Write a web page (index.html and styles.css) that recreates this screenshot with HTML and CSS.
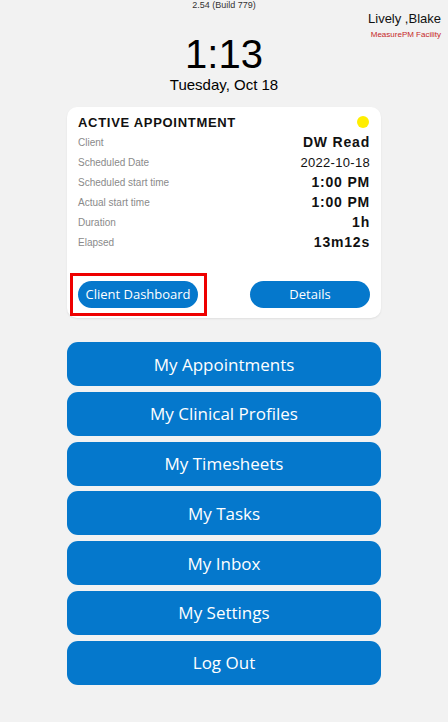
FILE: index.html
```html
<!DOCTYPE html>
<html lang="en">
<head>
    <meta charset="UTF-8">
    <meta name="viewport" content="width=device-width, initial-scale=1.0">
    <title>MeasurePM Home</title>
    <link rel="stylesheet" href="styles.css">
</head>
<body>

<div class="screen">
    <div class="version">2.54 (Build 779)</div>

    <!-- user info -->
    <div class="user">
        <div class="user-name">Lively ,Blake</div>
        <div class="user-facility">MeasurePM Facility</div>
    </div>

    <div class="clock">
        <div class="time">1:13</div>
        <div class="date">Tuesday, Oct 18</div>
    </div>

    <!-- active appointment card -->
    <div class="card">
        <div class="card-head">
            <h2>ACTIVE APPOINTMENT</h2>
            <span class="status-dot"></span>
        </div>
        <div class="row"><span class="label">Client</span><span class="value">DW Read</span></div>
        <div class="row"><span class="label">Scheduled Date</span><span class="value plain">2022-10-18</span></div>
        <div class="row"><span class="label">Scheduled start time</span><span class="value">1:00 PM</span></div>
        <div class="row"><span class="label">Actual start time</span><span class="value">1:00 PM</span></div>
        <div class="row"><span class="label">Duration</span><span class="value">1h</span></div>
        <div class="row"><span class="label">Elapsed</span><span class="value">13m12s</span></div>

        <div class="card-actions">
            <div class="highlight">
                <button class="pill">Client Dashboard</button>
            </div>
            <button class="pill">Details</button>
        </div>
    </div>

    <!-- main menu -->
    <div class="menu">
        <button class="menu-btn">My Appointments</button>
        <button class="menu-btn">My Clinical Profiles</button>
        <button class="menu-btn">My Timesheets</button>
        <button class="menu-btn">My Tasks</button>
        <button class="menu-btn">My Inbox</button>
        <button class="menu-btn">My Settings</button>
        <button class="menu-btn">Log Out</button>
    </div>
</div>

</body>
</html>
```

FILE: styles.css
```css
body {
    font-family: "Liberation Sans", Arial, sans-serif;
    margin: 0;
    padding: 0;
    background-color: #f2f2f2;
}
.screen {
    position: relative;
    width: 448px;
    height: 722px;
    padding: 0 67px;
    box-sizing: border-box;
}
.version {
    text-align: center;
    font-size: 9px;
    color: #333;
    line-height: 11px;
}
.user {
    position: absolute;
    top: 11px;
    right: 7px;
    text-align: right;
}
.user-name {
    font-size: 13px;
    color: #111;
    line-height: 16px;
}
.user-facility {
    font-size: 8px;
    color: #c62828;
    margin-top: 3px;
}
.clock {
    text-align: center;
    color: #000;
    margin-top: 21px;
}
.time {
    font-size: 40px;
    line-height: 44px;
}
.date {
    font-size: 15px;
    line-height: 18px;
}
.card {
    margin-top: 13px;
    background-color: #fff;
    border-radius: 10px;
    box-shadow: 0 1px 2px rgba(0, 0, 0, 0.08);
    padding: 6px 11px 10px 11px;
    height: 211px;
    box-sizing: border-box;
    display: flex;
    flex-direction: column;
}
.card-head {
    display: flex;
    justify-content: space-between;
    align-items: center;
    height: 18px;
    margin-bottom: 1px;
}
.card-head h2 {
    margin: 0;
    font-size: 13px;
    letter-spacing: 0.7px;
    color: #111;
}
.status-dot {
    width: 12px;
    height: 12px;
    border-radius: 50%;
    background-color: #ffee00;
    margin-right: 1px;
}
.row {
    display: flex;
    justify-content: space-between;
    align-items: center;
    height: 20px;
}
.label {
    font-size: 10px;
    color: #8a8a8a;
}
.value {
    font-size: 14px;
    font-weight: bold;
    letter-spacing: 0.8px;
    color: #111;
}
.value.plain {
    font-weight: normal;
    font-size: 13px;
    letter-spacing: 0.3px;
}
.card-actions {
    margin-top: auto;
    display: flex;
    justify-content: space-between;
    align-items: center;
    height: 28px;
}
.highlight {
    border: 3px solid #ee0000;
    margin: -9px 0 -9px -8px;
    padding: 5px 6px 5px 5px;
}
.pill {
    background-color: #0578cc;
    color: #fff;
    border: none;
    border-radius: 14px;
    font-family: "Open Sans", sans-serif;
    font-size: 13px;
    width: 120px;
    height: 27px;
    padding: 0;
}
.menu {
    margin-top: 24px;
    display: flex;
    flex-direction: column;
    gap: 5.8px;
}
.menu-btn {
    background-color: #0578cc;
    color: #fff;
    border: none;
    border-radius: 11px;
    height: 44px;
    font-family: "Open Sans", sans-serif;
    font-size: 17px;
    padding: 0;
}
```
